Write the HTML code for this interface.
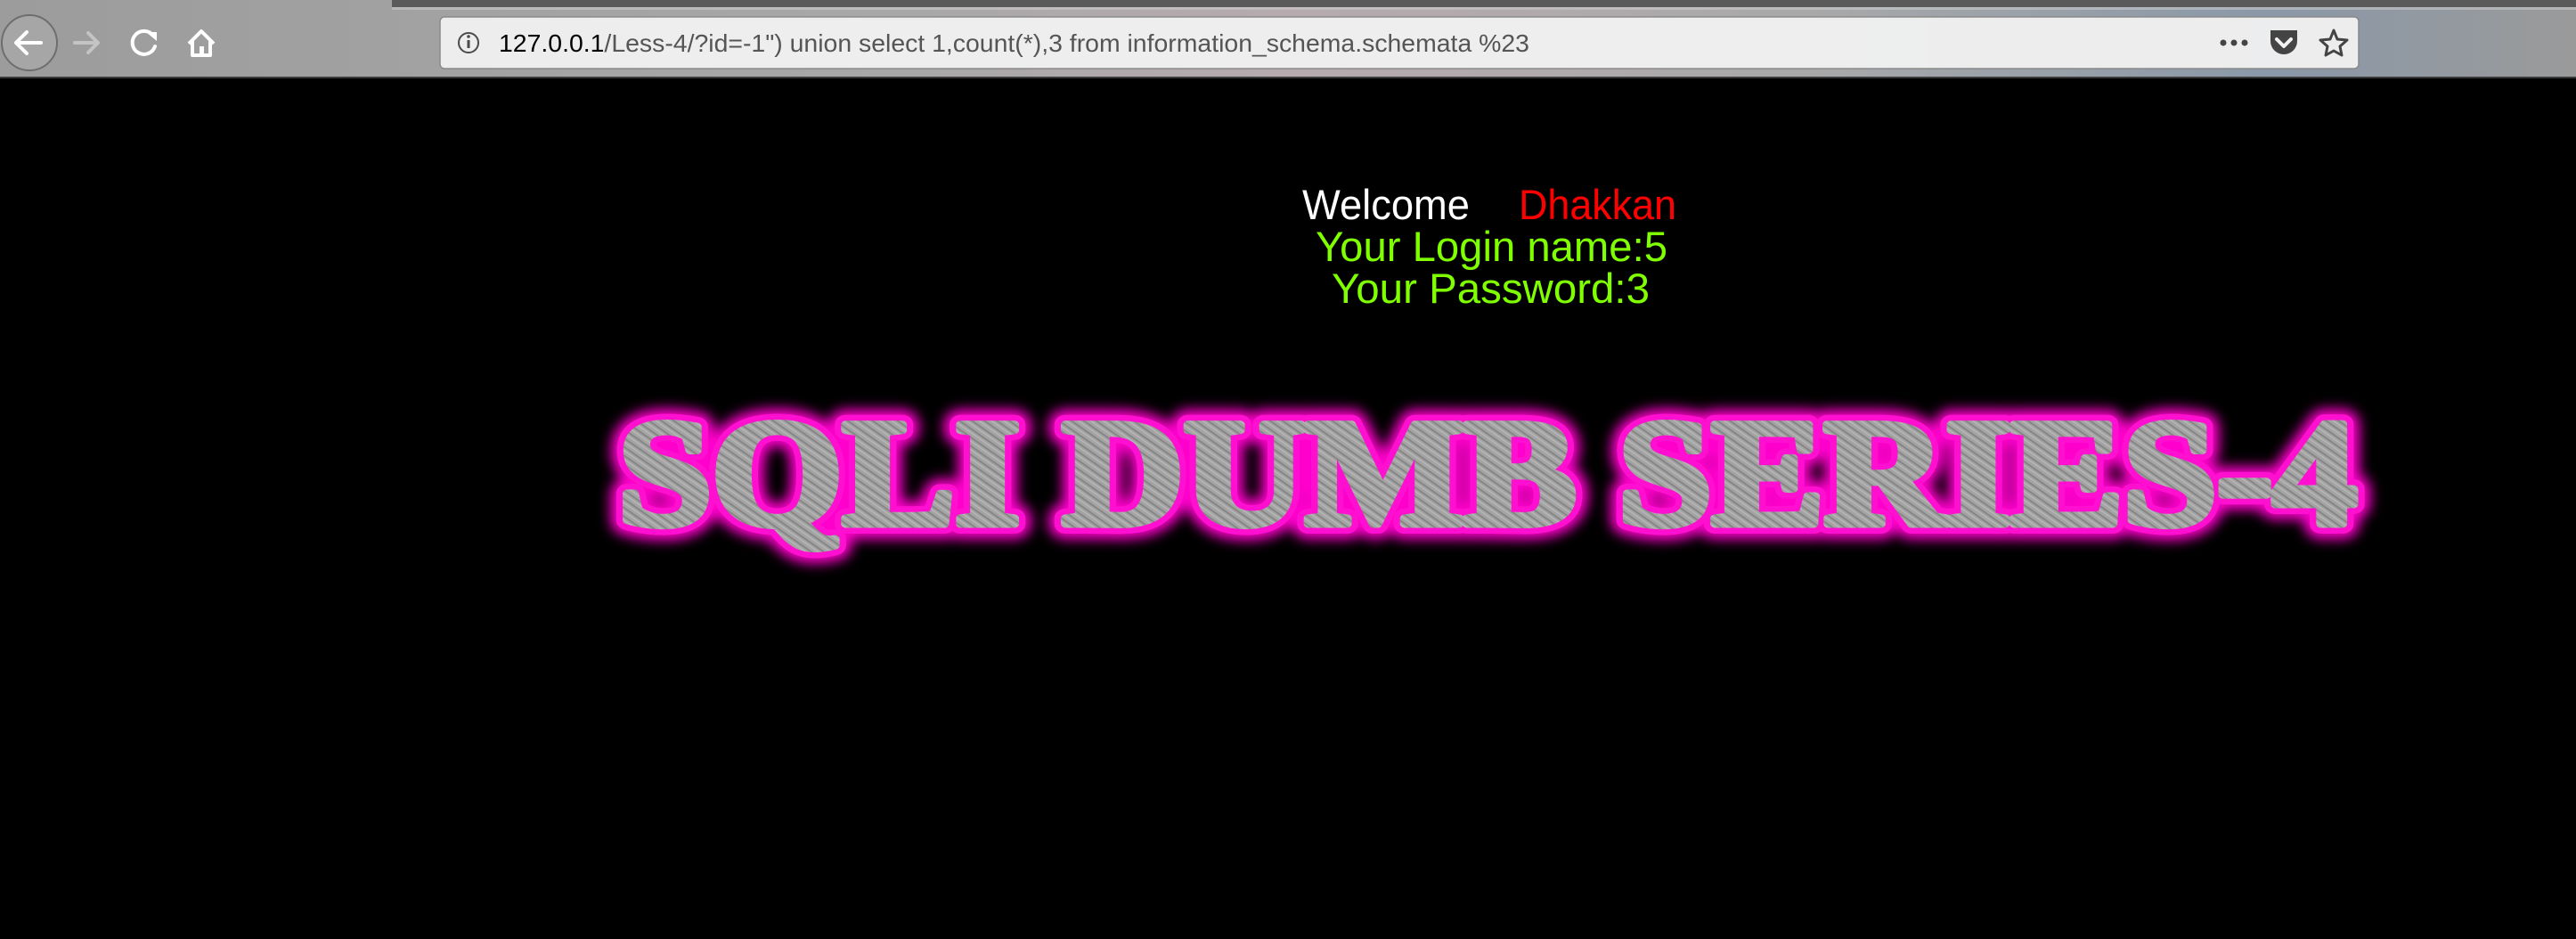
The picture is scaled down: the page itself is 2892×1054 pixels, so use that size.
<!DOCTYPE html>
<html><head><meta charset="utf-8"><style>
html,body{margin:0;padding:0;width:2892px;height:1054px;background:#000;overflow:hidden}
svg{position:absolute;left:0;top:0}
</style></head><body>
<svg width="2892" height="1054" viewBox="0 0 2892 1054" xmlns="http://www.w3.org/2000/svg">
<defs>
<linearGradient id="tb" x1="0" x2="1" y1="0" y2="0">
<stop offset="0" stop-color="#9c9c9c"/><stop offset="0.35" stop-color="#a8a8a8"/><stop offset="0.5" stop-color="#b6aaae"/><stop offset="0.7" stop-color="#a9a9a9"/><stop offset="0.88" stop-color="#8a98a8"/><stop offset="1" stop-color="#9a9a9a"/>
</linearGradient>
<filter id="glow" x="-5%" y="-30%" width="110%" height="160%"><feGaussianBlur stdDeviation="7"/></filter>
<pattern id="brush" width="8" height="8" patternUnits="userSpaceOnUse" patternTransform="rotate(35)">
<rect width="8" height="8" fill="#a4a4a4"/><rect width="8" height="2" fill="#868686"/><rect y="4" width="8" height="1" fill="#bcbcbc"/>
</pattern>
</defs>
<rect x="0" y="0" width="2892" height="88" fill="url(#tb)"/>
<rect x="440" y="0" width="2452" height="8" fill="#5a5a5a"/>
<rect x="440" y="8" width="2452" height="3" fill="#cfcfcf" opacity="0.5"/>
<rect x="0" y="86" width="2892" height="2" fill="#3a3a3a"/>
<circle cx="33" cy="48" r="31" fill="#a6a6a6" stroke="#6e6e6e" stroke-width="2"/>
<path d="M46 48 H18 M30 36 L18 48 L30 60" stroke="#fff" stroke-width="4" fill="none" stroke-linecap="round" stroke-linejoin="round"/>
<path d="M84 48 H110 M99 37 L110 48 L99 59" stroke="#c4c4c4" stroke-width="4" fill="none" stroke-linecap="round" stroke-linejoin="round"/>
<path d="M172 40 A13 13 0 1 0 174 52" stroke="#fff" stroke-width="4" fill="none" stroke-linecap="round"/>
<path d="M164 36 L176 36 L176 46 Z" fill="#fff"/>
<path d="M212 49 L226 35 L240 49 M216 46 V62 H236 V46" stroke="#fff" stroke-width="4" fill="none" stroke-linejoin="round"/>
<rect x="224" y="52" width="5" height="10" fill="#fff"/>
<rect x="494" y="19" width="2154" height="58" rx="5" fill="#f1f1f1" stroke="#8a8a8a" stroke-width="1.5" opacity="0.96"/>
<circle cx="526" cy="48" r="11" fill="none" stroke="#4a4a4a" stroke-width="2"/>
<rect x="524.5" y="45" width="3" height="9" fill="#4a4a4a"/><circle cx="526" cy="41" r="1.8" fill="#4a4a4a"/>
<text x="560" y="58" font-family="Liberation Sans, sans-serif" font-size="28" textLength="1157" lengthAdjust="spacingAndGlyphs" fill="#555"><tspan fill="#000">127.0.0.1</tspan>/Less-4/?id=-1") union select 1,count(*),3 from information_schema.schemata %23</text>
<circle cx="2496" cy="48" r="3.5" fill="#444"/><circle cx="2508" cy="48" r="3.5" fill="#444"/><circle cx="2520" cy="48" r="3.5" fill="#444"/>
<path d="M2549 34 H2579 V46 A15 15 0 0 1 2549 46 Z" fill="#444"/>
<path d="M2556 44 L2564 52 L2572 44" stroke="#f1f1f1" stroke-width="4" fill="none" stroke-linecap="round" stroke-linejoin="round"/>
<path d="M2620 34 L2624 44 L2635 45 L2627 52 L2629 62 L2620 57 L2611 62 L2613 52 L2605 45 L2616 44 Z" fill="none" stroke="#444" stroke-width="3" stroke-linejoin="round"/>
<g font-family="Liberation Sans, sans-serif" font-size="47">
<text x="1462" y="246" fill="#fff" textLength="188" lengthAdjust="spacingAndGlyphs">Welcome</text>
<text x="1705" y="246" fill="#ff0000" textLength="177" lengthAdjust="spacingAndGlyphs">Dhakkan</text>
<text x="1477" y="293" fill="#7fff00" textLength="395" lengthAdjust="spacingAndGlyphs">Your Login name:5</text>
<text x="1495" y="340" fill="#7fff00" textLength="357" lengthAdjust="spacingAndGlyphs">Your Password:3</text>
</g>
<g font-family="Liberation Serif, serif" font-weight="bold" font-size="170">
<text x="694" y="588" textLength="1952" lengthAdjust="spacingAndGlyphs" fill="#ff00cc" stroke="#ff00cc" stroke-width="34" stroke-linejoin="round" filter="url(#glow)">SQLI DUMB SERIES-4</text>
<text x="694" y="588" textLength="1952" lengthAdjust="spacingAndGlyphs" fill="#ff10d0" stroke="#ff10d0" stroke-width="22" stroke-linejoin="round">SQLI DUMB SERIES-4</text>
<text x="694" y="588" textLength="1952" lengthAdjust="spacingAndGlyphs" fill="url(#brush)" stroke="url(#brush)" stroke-width="9" stroke-linejoin="round">SQLI DUMB SERIES-4</text>
</g>
</svg>
</body></html>
